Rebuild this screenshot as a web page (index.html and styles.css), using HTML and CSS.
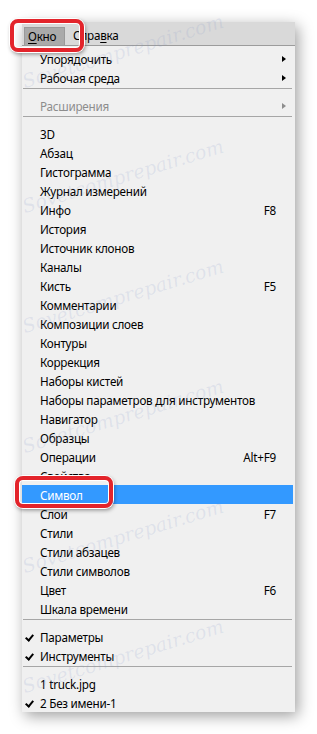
FILE: index.html
```html
<!DOCTYPE html>
<html lang="ru">
<head>
    <meta charset="UTF-8">
    <meta name="viewport" content="width=device-width, initial-scale=1.0">
    <title>Окно</title>
    <link rel="stylesheet" href="styles.css">
</head>
<body>
    <div class="menu">
        <div class="menubar">
            <span class="bar-item pressed"><u>О</u>кно</span>
            <span class="bar-item">Спра<u>в</u>ка</span>
        </div>

        <ul class="list">
            <li class="item"><span class="label">Упорядочить</span><span class="end"><i class="arrow"></i></span></li>
            <li class="item"><span class="label">Рабочая среда</span><span class="end"><i class="arrow"></i></span></li>
            <li class="sep"></li>
            <li class="item disabled"><span class="label">Расширения</span><span class="end"><i class="arrow"></i></span></li>
            <li class="sep"></li>
            <li class="item"><span class="label">3D</span></li>
            <li class="item"><span class="label">Абзац</span></li>
            <li class="item"><span class="label">Гистограмма</span></li>
            <li class="item"><span class="label">Журнал измерений</span></li>
            <li class="item"><span class="label">Инфо</span><span class="key">F8</span></li>
            <li class="item"><span class="label">История</span></li>
            <li class="item"><span class="label">Источник клонов</span></li>
            <li class="item"><span class="label">Каналы</span></li>
            <li class="item"><span class="label">Кисть</span><span class="key">F5</span></li>
            <li class="item"><span class="label">Комментарии</span></li>
            <li class="item"><span class="label">Композиции слоев</span></li>
            <li class="item"><span class="label">Контуры</span></li>
            <li class="item"><span class="label">Коррекция</span></li>
            <li class="item"><span class="label">Наборы кистей</span></li>
            <li class="item"><span class="label">Наборы параметров для инструментов</span></li>
            <li class="item"><span class="label">Навигатор</span></li>
            <li class="item"><span class="label">Образцы</span></li>
            <li class="item"><span class="label">Операции</span><span class="key">Alt+F9</span></li>
            <li class="item"><span class="label">Свойства</span></li>
            <li class="item active"><span class="label">Символ</span></li>
            <li class="item"><span class="label">Слои</span><span class="key">F7</span></li>
            <li class="item"><span class="label">Стили</span></li>
            <li class="item"><span class="label">Стили абзацев</span></li>
            <li class="item"><span class="label">Стили символов</span></li>
            <li class="item"><span class="label">Цвет</span><span class="key">F6</span></li>
            <li class="item"><span class="label">Шкала времени</span></li>
            <li class="sep"></li>
            <li class="item checked"><span class="label">Параметры</span></li>
            <li class="item checked"><span class="label">Инструменты</span></li>
            <li class="sep"></li>
            <li class="item"><span class="label">1 truck.jpg</span></li>
            <li class="item checked"><span class="label">2 Без имени-1</span></li>
        </ul>
    </div>

    <!-- водяной знак -->
    <div class="watermark w1">Sovetcomprepair.com</div>
    <div class="watermark w2">Sovetcomprepair.com</div>
    <div class="watermark w3">Sovetcomprepair.com</div>
    <div class="watermark w4">Sovetcomprepair.com</div>
    <div class="watermark w5">Sovetcomprepair.com</div>
    <div class="watermark w6">Sovetcomprepair.com</div>

    <!-- красные рамки-выделения -->
    <div class="callout callout-menu"></div>
    <div class="callout callout-item"></div>
</body>
</html>
```

FILE: styles.css
```css
body {
    margin: 0;
    background: #fff;
    font-family: 'Segoe UI', 'Noto Sans', sans-serif;
    font-size: 11.7px;
    letter-spacing: -0.25px;
    color: #000;
    position: relative;
    height: 734px;
    overflow: hidden;
}
.menu {
    margin: 22px 0 0 22px;
    width: 273px;
    height: 690px;
    background: #f0f0f0;
    box-shadow: 3px 4px 14px rgba(0,0,0,0.38);
}
.menubar {
    height: 23px;
    background: #d9d9d9;
    border-bottom: 1px solid #9c9c9c;
    display: flex;
    align-items: flex-end;
    padding-left: 2px;
}
.bar-item {
    height: 18px;
    line-height: 17px;
    box-sizing: border-box;
}
.bar-item.pressed {
    background: #aaaaaa;
    border: 1px solid #9a9a9a;
    border-bottom: none;
    width: 41px;
    padding-left: 3px;
    margin-right: 8px;
}
.bar-item u {
    text-decoration-thickness: 1px;
    text-underline-offset: 2px;
}
.list {
    list-style: none;
    margin: 0;
    padding: 3px 0 0;
}
.item {
    display: flex;
    align-items: center;
    height: 19px;
    padding: 0 19px 0 18px;
    position: relative;
}
.item .label {
    flex: 1;
    white-space: nowrap;
}
.item .key {
    text-align: right;
}
.item .end {
    width: 19px;
    height: 19px;
    margin-right: -19px;
    display: flex;
    align-items: center;
    flex-shrink: 0;
}
.arrow {
    margin-left: 6px;
    width: 0;
    height: 0;
    border-top: 3.5px solid transparent;
    border-bottom: 3.5px solid transparent;
    border-left: 4px solid #000;
}
.disabled {
    color: #8d8d8d;
}
.disabled .arrow {
    border-left-color: #8d8d8d;
}
.active {
    background: #3399ff;
    color: #fff;
    margin-right: 2px;
}
.checked::before {
    content: "";
    position: absolute;
    left: 5px;
    top: 6px;
    width: 3px;
    height: 6px;
    border-right: 2px solid #000;
    border-bottom: 2px solid #000;
    transform: rotate(40deg);
}
.sep {
    height: 1px;
    background: #a6a6a6;
    margin: 1px 3px 7px 1px;
}
.watermark {
    position: absolute;
    font-family: 'DejaVu Serif', serif;
    font-style: italic;
    font-size: 19px;
    letter-spacing: 0;
    color: rgba(130,150,200,0.16);
    transform: rotate(-17deg);
    transform-origin: left bottom;
    white-space: nowrap;
    pointer-events: none;
}
.w1 { left: 26px; top: 70px; }
.w2 { left: 26px; top: 195px; }
.w3 { left: 26px; top: 315px; }
.w4 { left: 26px; top: 435px; }
.w5 { left: 26px; top: 555px; }
.w6 { left: 26px; top: 675px; }
.callout {
    position: absolute;
    border: 4px solid #e3242b;
    border-radius: 8px;
    box-sizing: border-box;
    box-shadow: inset 0 0 0 1px #fff, 0 0 0 1px #fff, 1px 2px 4px rgba(0,0,0,0.45);
}
.callout-menu {
    left: 10px;
    top: 19px;
    width: 74px;
    height: 33px;
}
.callout-item {
    left: 15px;
    top: 476px;
    width: 98px;
    height: 32px;
}
```
